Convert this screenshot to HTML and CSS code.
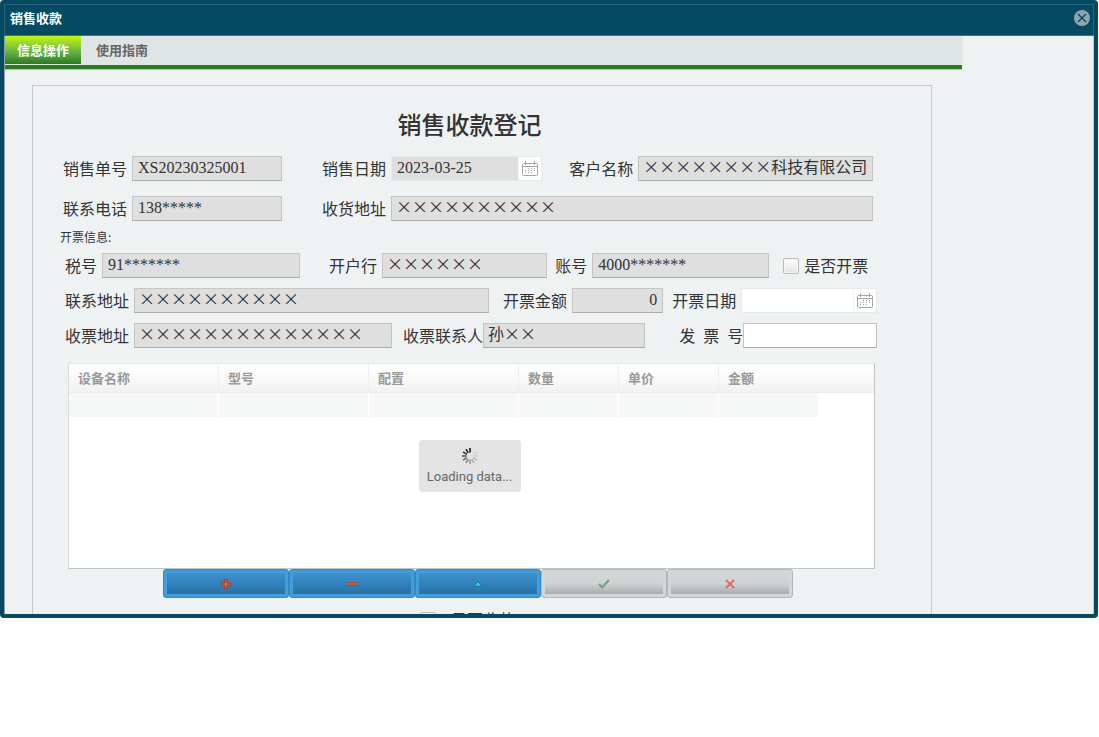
FILE: index.html
```html
<!DOCTYPE html>
<html lang="zh-CN">
<head>
  <meta charset="UTF-8">
  <title>销售收款</title>
  <link rel="stylesheet" href="styles.css">
</head>
<body>

<div class="dialog">
  <div class="dialog-header">
    <h1>销售收款</h1>
    <button class="close-button" type="button" aria-label="关闭">
      <svg width="16" height="16" viewBox="0 0 16 16">
        <circle cx="8" cy="8" r="8" fill="#8fa5ad"/>
        <path d="M4 4l8 8M12 4l-8 8" stroke="#034a62" stroke-width="1.4"/>
      </svg>
    </button>
  </div>

  <div class="dialog-body">
    <div class="tabs">
      <button class="tab active" type="button">信息操作</button>
      <button class="tab" type="button">使用指南</button>
    </div>

    <form class="panel">
      <h2>销售收款登记</h2>

      <div class="row row-sale">
        <div class="field order">
          <label for="orderNo">销售单号</label>
          <input id="orderNo" type="text" value="XS20230325001" readonly>
        </div>
        <div class="field sale-date">
          <label for="saleDate">销售日期</label>
          <div class="date-box disabled">
            <input id="saleDate" type="text" value="2023-03-25" readonly>
            <button type="button" aria-label="选择日期">
              <svg width="16" height="16" viewBox="0 0 16 16" fill="none" stroke="#a3a3a3">
                <rect x="0.5" y="2.5" width="15" height="12" rx="1"/>
                <path d="M1 5.5h14M3.5 0v4M12.5 0v4"/>
                <path d="M6 7.5h7M3 9.5h10M3 11.5h7" stroke-dasharray="1 2" stroke-width="1"/>
              </svg>
            </button>
          </div>
        </div>
        <div class="field customer">
          <label for="customer">客户名称</label>
          <input id="customer" class="cjk" type="text" value="××××××××科技有限公司" readonly>
        </div>
      </div>

      <div class="row row-sale">
        <div class="field order">
          <label for="phone">联系电话</label>
          <input id="phone" type="text" value="138*****" readonly>
        </div>
        <div class="field ship-address">
          <label for="shipAddress">收货地址</label>
          <input id="shipAddress" class="cjk" type="text" value="××××××××××" readonly>
        </div>
      </div>

      <h3>开票信息:</h3>

      <div class="row row-invoice">
        <div class="field tax">
          <label for="taxNo">税号</label>
          <input id="taxNo" type="text" value="91*******" readonly>
        </div>
        <div class="field bank">
          <label for="bank">开户行</label>
          <input id="bank" class="cjk" type="text" value="××××××" readonly>
        </div>
        <div class="field account">
          <label for="account">账号</label>
          <input id="account" type="text" value="4000*******" readonly>
        </div>
        <div class="check">
          <input id="needInvoice" type="checkbox">
          <label for="needInvoice">是否开票</label>
        </div>
      </div>

      <div class="row row-invoice">
        <div class="field contact-address">
          <label for="contactAddress">联系地址</label>
          <input id="contactAddress" class="cjk" type="text" value="××××××××××" readonly>
        </div>
        <div class="field amount">
          <label for="amount">开票金额</label>
          <input id="amount" class="number" type="text" value="0" readonly>
        </div>
        <div class="field invoice-date">
          <label for="invoiceDate">开票日期</label>
          <div class="date-box">
            <input id="invoiceDate" type="text">
            <button type="button" aria-label="选择日期">
              <svg width="16" height="16" viewBox="0 0 16 16" fill="none" stroke="#a3a3a3">
                <rect x="0.5" y="2.5" width="15" height="12" rx="1"/>
                <path d="M1 5.5h14M3.5 0v4M12.5 0v4"/>
                <path d="M6 7.5h7M3 9.5h10M3 11.5h7" stroke-dasharray="1 2" stroke-width="1"/>
              </svg>
            </button>
          </div>
        </div>
      </div>

      <div class="row row-invoice">
        <div class="field ticket-address">
          <label for="ticketAddress">收票地址</label>
          <input id="ticketAddress" class="cjk" type="text" value="××××××××××××××" readonly>
        </div>
        <div class="field tight receiver">
          <label for="receiver">收票联系人</label>
          <input id="receiver" class="cjk" type="text" value="孙××" readonly>
        </div>
        <div class="field tight invoice-no">
          <label for="invoiceNo">发&ensp;票&ensp;号</label>
          <input id="invoiceNo" type="text">
        </div>
      </div>

      <div class="grid">
        <table>
          <colgroup>
            <col class="wide"><col class="wide"><col class="wide">
            <col class="narrow"><col class="narrow"><col class="narrow"><col>
          </colgroup>
          <thead>
            <tr>
              <th>设备名称</th>
              <th>型号</th>
              <th>配置</th>
              <th>数量</th>
              <th>单价</th>
              <th>金额</th>
              <td></td>
            </tr>
          </thead>
          <tbody>
            <tr>
              <td></td><td></td><td></td><td></td><td></td><td></td><td class="filler"></td>
            </tr>
          </tbody>
        </table>
        <div class="loading">
          <svg width="16" height="16" viewBox="-8 -8 16 16" stroke-width="1.6">
            <path d="M0 -3.5V-8" stroke="#111"/>
            <path d="M0 -3.5V-8" stroke="#e0e0e0" transform="rotate(30)"/>
            <path d="M0 -3.5V-8" stroke="#d6d6d6" transform="rotate(60)"/>
            <path d="M0 -3.5V-8" stroke="#cccccc" transform="rotate(90)"/>
            <path d="M0 -3.5V-8" stroke="#bdbdbd" transform="rotate(120)"/>
            <path d="M0 -3.5V-8" stroke="#aaaaaa" transform="rotate(150)"/>
            <path d="M0 -3.5V-8" stroke="#999999" transform="rotate(180)"/>
            <path d="M0 -3.5V-8" stroke="#858585" transform="rotate(210)"/>
            <path d="M0 -3.5V-8" stroke="#707070" transform="rotate(240)"/>
            <path d="M0 -3.5V-8" stroke="#555555" transform="rotate(270)"/>
            <path d="M0 -3.5V-8" stroke="#3a3a3a" transform="rotate(300)"/>
            <path d="M0 -3.5V-8" stroke="#222222" transform="rotate(330)"/>
          </svg>
          <span>Loading data...</span>
        </div>
      </div>

      <div class="toolbar">
        <button type="button" aria-label="新增">
          <svg width="10" height="10" viewBox="0 0 10 10">
            <path d="M5 0v10M0 5h10" stroke="#c92a00" stroke-width="3"/>
            <path d="M5 1v8M1 5h8" stroke="#ff7a2e"/>
          </svg>
        </button>
        <button type="button" aria-label="删除">
          <svg width="10" height="10" viewBox="0 0 10 10">
            <path d="M0 5h10" stroke="#c92a00" stroke-width="3"/>
            <path d="M0 5h10" stroke="#ff7a2e"/>
          </svg>
        </button>
        <button type="button" aria-label="编辑">
          <svg width="10" height="10" viewBox="0 0 10 10">
            <path d="M5 3L9.5 7.5h-9z" fill="#12c4d4" stroke="#0a8495"/>
            <path d="M5 4v2" stroke="#6ef0f5"/>
          </svg>
        </button>
        <button type="button" aria-label="保存" disabled>
          <svg width="12" height="10" viewBox="0 0 12 10" fill="none">
            <path d="M1 5l3 3.5L11 1" stroke="#6aa384" stroke-width="2"/>
          </svg>
        </button>
        <button type="button" aria-label="取消" disabled>
          <svg width="10" height="10" viewBox="0 0 10 10" fill="none">
            <path d="M1 1l8 8M9 1l-8 8" stroke="#d9706a" stroke-width="2"/>
          </svg>
        </button>
      </div>

      <div class="check paid">
        <input id="isPaid" type="checkbox">
        <label for="isPaid">是否收款</label>
      </div>
    </form>
  </div>
</div>

</body>
</html>
```

FILE: styles.css
```css
* {
  box-sizing: border-box;
}
body {
  margin: 0;
  background: #fff;
  color: #333;
  font-family: "Liberation Serif", "Noto Sans CJK SC", serif;
  font-size: 16px;
}
h1, h2, h3 {
  margin: 0;
}
button, input {
  font: inherit;
  color: inherit;
}

/* dialog window */
.dialog {
  display: flex;
  flex-direction: column;
  height: calc(100vh - 119px);
  margin-right: 1px;
  padding: 4px;
  background: #034a62;
  border-radius: 4px;
}
.dialog-header {
  display: flex;
  flex: none;
  align-items: center;
  justify-content: space-between;
  height: 32px;
  padding: 0 3px 4px 5px;
  border: 1px solid #29647a;
  border-bottom: 1px solid #3f7386;
}
.dialog-header h1 {
  color: #fff;
  font: bold 13px/18px "Noto Sans CJK SC", sans-serif;
}
.close-button {
  width: 16px;
  height: 16px;
  padding: 0;
  border: none;
  background: none;
  cursor: pointer;
}
.close-button svg {
  display: block;
}
.dialog-body {
  flex: 1;
  min-height: 0;
  overflow: hidden;
  padding-right: 12%;
  background: #eef2f3;
  border-left: 1px solid #8aa1aa;
  border-right: 1px solid #c2cdd1;
}

/* tabs */
.tabs {
  display: flex;
  height: 33px;
  background: #dfe4e4;
  border-bottom: 4px solid #2c7a1e;
  box-shadow: 0 1px 1px #b9c9b5;
}
.tab {
  height: 28px;
  padding: 0 15px;
  border: none;
  background: none;
  color: #666;
  font: bold 13px/28px "Noto Sans CJK SC", sans-serif;
  cursor: pointer;
}
.tab.active {
  padding: 0 12px;
  background: linear-gradient(#c4f60f, #5fb045 60%, #2c7a1e);
  color: #fff;
}

/* form */
.panel {
  margin: 16px 30px 0 27px;
  padding: 22px 54px 0 27px;
  border: 1px solid #c4c8c9;
  border-bottom: none;
}
h2 {
  margin-bottom: 16px;
  padding-left: 2px;
  font: 500 24px/32px "Noto Sans CJK SC", sans-serif;
  text-align: center;
}
h3 {
  font: 12px/32px "Noto Sans CJK SC", sans-serif;
}
.row {
  display: flex;
  align-items: center;
  height: 25px;
  margin-bottom: 10px;
}
.row-sale {
  padding: 0 4px 0 3px;
}
.row-sale + .row-sale {
  margin-top: 15px;
  margin-bottom: 0;
}
.row-invoice {
  padding-left: 5px;
}
.field {
  display: flex;
  align-items: center;
  gap: 5px;
  min-width: 0;
}
.field.tight {
  gap: 0;
}
label {
  flex: none;
  padding-bottom: 2px;
  font-family: "Noto Sans CJK SC", sans-serif;
  line-height: 24px;
  white-space: nowrap;
}
.order { flex: 219; margin-right: 40px; }
.sale-date { flex: 220; margin-right: 27px; }
.customer { flex: 304; }
.ship-address { flex: 551; }
.tax { flex: 235; margin-right: 29px; }
.bank { flex: 218; margin-right: 8px; }
.account { flex: 214; margin-right: 14px; }
.contact-address { flex: 424; margin-right: 14px; }
.amount { flex: 160; margin-right: 9px; }
.invoice-date { flex: 205; }
.ticket-address { flex: 327; margin-right: 11px; }
.receiver { flex: 242; margin-right: 34px; }
.invoice-no { flex: 198; }

input[type="text"] {
  flex: 1;
  width: 100%;
  min-width: 0;
  height: 25px;
  padding: 0 5px 2px;
  border: 1px solid #c4c4c4;
  border-bottom-color: #aaa;
  background: #fff;
}
input[type="text"]:read-only {
  background: #dfdfdf;
}
input.cjk {
  padding: 0 4px 6px;
  font-family: "Noto Sans CJK SC", sans-serif;
}
input.number {
  text-align: right;
}

.date-box {
  display: flex;
  flex: 1;
  min-width: 0;
  height: 25px;
  border: 1px solid #e6eaeb;
  background: #fff;
}
.date-box input[type="text"] {
  height: 23px;
  border: none;
}
.date-box button {
  flex: none;
  width: 23px;
  padding: 0 3px;
  border: none;
  border-left: 1px solid #f3f3f3;
  background: #fff;
}
.date-box svg {
  display: block;
}

.check {
  display: flex;
  flex: none;
  align-items: center;
  gap: 5px;
  margin-right: 9px;
}
input[type="checkbox"] {
  appearance: none;
  width: 16px;
  height: 16px;
  margin: 0;
  border: 1px solid #bbb;
  border-radius: 2px;
  background: linear-gradient(#fff, #e4e4e4);
  box-shadow: inset 0 0 0 1px #f6f6f6;
}

/* device list */
.grid {
  position: relative;
  height: 206px;
  margin: 15px 2px 0 8px;
  border: 1px solid #c0c4c5;
  border-top-color: #e4e7e7;
  border-left-color: #d8dbdb;
  background: #fff;
}
table {
  width: 100%;
  table-layout: fixed;
  border-collapse: separate;
  border-spacing: 0;
}
.wide {
  width: 150px;
}
.narrow {
  width: 100px;
}
thead th, thead td {
  height: 29px;
  padding: 0 9px;
  border-bottom: 1px solid #ececec;
  background: linear-gradient(#fff, #f2f2f2);
  color: #999;
  font: bold 13px/28px "Noto Sans CJK SC", sans-serif;
  text-align: left;
}
thead th {
  border-right: 1px solid #eee;
}
thead th:last-of-type {
  border-right: none;
}
tbody td {
  height: 24px;
  border-right: 1px solid #fff;
  background: #f6f8f8;
}
tbody .filler {
  background: #fff;
}
.loading {
  position: absolute;
  top: 76px;
  left: calc(50% - 53px);
  display: flex;
  flex-direction: column;
  align-items: center;
  gap: 4px;
  width: 102px;
  height: 52px;
  padding-top: 8px;
  border-radius: 3px;
  background: #e4e4e4;
  color: #666;
  font: 13px/18px Roboto, sans-serif;
  white-space: nowrap;
}

/* buttons under the list */
.toolbar {
  display: flex;
  margin: 0 84px 0 103px;
}
.toolbar button {
  display: flex;
  flex: 1;
  align-items: center;
  justify-content: center;
  height: 29px;
  padding: 0;
  border: 1px solid #3587c0;
  border-radius: 3px;
  background: linear-gradient(#3f98d6, #236c9f);
  box-shadow: inset 0 0 0 3px #429ddd;
  cursor: pointer;
}
.toolbar button:disabled {
  border-color: #b4b7b8;
  background: linear-gradient(#d6d9d9, #cfd2d2 50%, #9ea1a1);
  box-shadow: inset 0 0 0 3px #d3d7d8;
  cursor: default;
}
.paid {
  gap: 15px;
  margin: 9px 0 0 360px;
}
```
